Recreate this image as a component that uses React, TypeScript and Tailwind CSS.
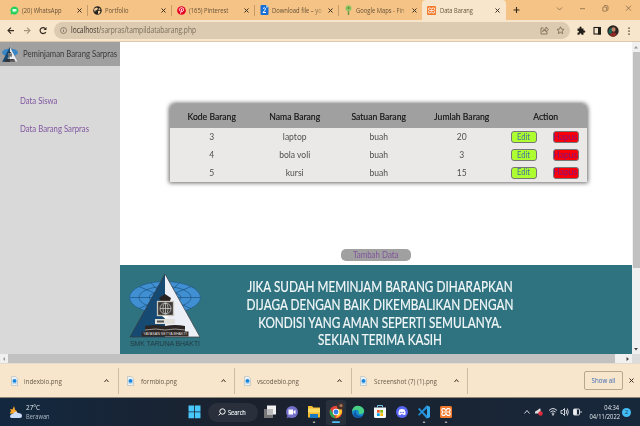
import React from 'react';

const tabs = [
  { title: '(20) WhatsApp', icon: 'wa' },
  { title: 'Portfolio', icon: 'globe' },
  { title: '(165) Pinterest', icon: 'pin' },
  { title: 'Download file – yo', icon: 'two' },
  { title: 'Google Maps - Fin', icon: 'map' },
];

const rows = [
  ['3', 'laptop', 'buah', '20'],
  ['4', 'bola voli', 'buah', '3'],
  ['5', 'kursi', 'buah', '15'],
];

const downloads = ['indexbio.png', 'formbio.png', 'vscodebio.png', 'Screenshot (7) (1).png'];

function Xampp({ className }: { className: string }) {
  return (
    <svg className={className} viewBox="0 0 16 16">
      <rect width="16" height="16" rx="2" fill="#f27a2c" />
      <path d="M4 3.500h2.200L8 6l1.800-2.500H12q1.500 0 1.500 1.500v1.300L12 8l1.500 1.700V11q0 1.500-1.500 1.500H9.800L8 10l-1.800 2.500H4Q2.500 12.500 2.500 11V9.700L4 8 2.500 6.300V5Q2.500 3.500 4 3.500Z" fill="none" stroke="#fff" strokeWidth="1.500" />
      <path d="M5 8h6" stroke="#fff" strokeWidth="1.500" />
    </svg>
  );
}

function TabIcon({ name }: { name: string }) {
  const cls = 'h-[9px] w-[9px] shrink-0';
  if (name === 'wa')
    return (
      <svg className={cls} viewBox="0 0 18 18">
        <path d="M9 1a8 8 0 1 1-4 15l-4 1 1-4A8 8 0 0 1 9 1Z" fill="#27cf5b" />
        <path d="M5 6h8v5H9l-2 2v-2H5Z" fill="#d9ffe4" />
      </svg>
    );
  if (name === 'globe')
    return (
      <svg className={cls} viewBox="0 0 18 18">
        <circle cx="9" cy="9" r="8.500" fill="#272522" />
        <path d="m3 5 4-2 3 2-2 3-3 1-1 3-2-4Zm7 5 3-1 2 2-2 4-3 1Zm2-6 3 2-1 2-3-1Z" fill="#f3ca97" />
      </svg>
    );
  if (name === 'pin')
    return (
      <svg className={cls} viewBox="0 0 18 18">
        <circle cx="9" cy="9" r="8.700" fill="#e60023" />
        <path d="m7 15 2.500-9M6 10C3 6 6 3.500 9.300 3.500c4 0 4.700 3.500 3.300 6-1 2-3.400 2-4 .5" fill="none" stroke="#fff" strokeWidth="1.900" />
      </svg>
    );
  if (name === 'two')
    return (
      <svg className="h-[10px] w-[9px] shrink-0" viewBox="0 0 18 20">
        <path d="M3 0h9l5 5v13q0 2-2 2H3q-2 0-2-2V2q0-2 2-2Z" fill="#176fd6" />
        <path d="m12 0 5 5h-5Z" fill="#8fd1ff" />
        <path d="M6 7q3-3 5 0 0 3-5 8h6" fill="none" stroke="#fff" strokeWidth="2" />
      </svg>
    );
  return (
    <svg className="h-[10px] w-[9px] shrink-0" viewBox="0 0 18 20">
      <path d="M9 9v11" stroke="#729345" strokeWidth="3" />
      <circle cx="9" cy="6.500" r="6" fill="#91c465" />
      <circle cx="9" cy="6" r="2" fill="#57843c" />
    </svg>
  );
}

function Close({ className = 'h-[5px] w-[5px]' }: { className?: string }) {
  return (
    <svg className={`${className} shrink-0`} viewBox="0 0 10 10">
      <path d="m1 1 8 8m0-8-8 8" stroke="#3b3024" strokeWidth="2" />
    </svg>
  );
}

function TabStrip() {
  return (
    <div className="flex h-5 bg-[#f4c385] text-[7.300px] text-[#67523a]">
      <div className="flex w-[422px] items-center pl-[5px]">
        {tabs.map((t, i) => (
          <div
            key={t.title}
            className={`flex h-[11px] w-[83.400px] items-center pl-[5px] pr-[5px] ${i < 4 ? 'border-r border-[#c49c69]' : ''}`}
          >
            <TabIcon name={t.icon} />
            <div className={`ml-[3px] w-[54px] whitespace-nowrap leading-[11px] ${i > 2 ? '[mask-image:linear-gradient(to_right,black_78%,transparent)]' : ''}`}>
              <span className="inline-block origin-left scale-x-[0.8]">{t.title}</span>
            </div>
            <div className="grow" />
            <Close />
          </div>
        ))}
      </div>
      <div className="flex w-[84px] items-center rounded-t-[4px] bg-[#f8e6cc] pl-[5px] pr-[6px]">
        <Xampp className="h-[9px] w-[9px] shrink-0" />
        <span className="ml-[4px] w-[54px] origin-left scale-x-[0.78] whitespace-nowrap">Data Barang</span>
        <div className="grow" />
        <Close />
      </div>
      <svg className="h-5 w-[134px]" viewBox="506 0 134 20" fill="none" stroke="#85694a" strokeWidth="0.8">
        <path d="M513.500 10h6m-3-3v6" stroke="#382819" strokeWidth="1.100" />
        <path d="m557 7.500 2.500 2.500 2.500-2.500M580 8.700h5M626 5.700l5 5m0-5-5 5" />
        <rect x="602.800" y="7" width="3.800" height="4.200" rx="0.800" />
        <path d="M604 6q0-.5 1-.5h1.500q1.500 0 1.500 1.500v2.500q0 1-1 1" />
      </svg>
    </div>
  );
}

function Toolbar() {
  return (
    <div className="flex h-[22px] items-center border-b border-[#dcc9ad] bg-[#f8e6cc]">
      <svg className="h-[21px] w-[54px]" viewBox="0 20 54 21" fill="none" strokeWidth="1.100">
        <path d="M14 30.600H8m3-3-3 3 3 3" stroke="#332a20" />
        <path d="M24 30.600h6m-3-3 3 3-3 3" stroke="#a6957d" />
        <path d="M45.500 28.700a3 3 0 1 0 .3 3.200" stroke="#332a20" strokeWidth="1.200" />
        <path d="M46.500 27v3h-3Z" fill="#332a20" />
      </svg>
      <div className="flex h-[17px] w-[96px] grow items-center rounded-full bg-[#dccbb1] pl-[6px] pr-[5px]">
        <svg className="h-[7px] w-[7px] shrink-0" viewBox="0 0 14 14" fill="none" stroke="#6b6255" strokeWidth="1.400">
          <circle cx="7" cy="7" r="6" />
          <path d="M7 6v4M7 3.500v1.500" />
        </svg>
        <span className="ml-[4px] origin-left scale-x-[0.8] whitespace-nowrap text-[8.300px] leading-none text-[#776b5b]">
          <span className="text-[#3b342b]">localhost</span>/sarpras/tampildatabarang.php
        </span>
        <div className="grow" />
        <svg className="h-[9px] w-[25px]" viewBox="0 0 25 9" fill="none" stroke="#756650" strokeWidth="0.800">
          <path d="M3.500 2H1v6h6V6M2.500 5.500q.5-2.500 3.500-2.500V1l2.500 2.800L6 6V4.300Q4 4.200 2.500 5.500Z" />
          <path d="m20.500.8 1 2.300 2.500.3-1.900 1.700.5 2.500-2.100-1.300-2.200 1.300.6-2.500L17 3.400l2.500-.3Z" />
        </svg>
      </div>
      <svg className="h-[21px] w-[70px]" viewBox="570 20 70 21">
        <path d="M577.500 28.500h2q-.5-2 1-2t1 2h2v2q1.800-.5 1.800 1t-1.800 1v2.200h-2q0-1.500-1.100-1.500t-1 1.500h-1.900v-2q1.500 0 1.500-1t-1.500-1Z" fill="#211d19" />
        <rect x="594" y="27.500" width="6.200" height="6.500" fill="none" stroke="#211d19" strokeWidth="1.100" />
        <path d="M598 27h3v7.500h-3Z" fill="#211d19" />
        <circle cx="613" cy="31" r="5.700" fill="#2b2420" />
        <path d="M608.500 33q0-6 4-5l-1 7Z" fill="#1d6259" />
        <ellipse cx="613.600" cy="29.500" rx="2" ry="2.200" fill="#c18267" />
        <path d="M609.500 35q3.500-5 7.500-1l-2.500 2.500h-3Z" fill="#8e2a23" />
        <path d="M628.300 27.400h1.400v1.400h-1.400Zm0 3h1.400v1.400h-1.400Zm0 3h1.400v1.400h-1.400Z" fill="#3a3024" />
      </svg>
    </div>
  );
}

function SchoolMark({ className }: { className: string }) {
  return (
    <svg className={`${className} shrink-0`} viewBox="0 0 72 64" preserveAspectRatio="none">
      <ellipse cx="36" cy="23.500" rx="35.500" ry="16" fill="#3f8fd2" stroke="#225c8a" strokeWidth="0.700" />
      <g fill="none" stroke="#1d5380" strokeWidth="0.700">
        <ellipse cx="36" cy="23.500" rx="26" ry="11" />
        <ellipse cx="36" cy="23.500" rx="16" ry="6" />
        <path d="M1 23.500h70M10 12.500l52 22M62 12.500l-52 22M22 9l28 29M50 9 22 38" />
      </g>
      <path d="M36 0 1 63h35Z" fill="#174a73" />
      <path d="m36 0 35 63H36Z" fill="#eceff5" />
      <path d="M36 0 1 63h70Z" fill="none" stroke="#333b40" strokeWidth="0.700" />
      <path d="m30 24 6-4 6 4-1 3h-9Z" fill="#282221" />
      <rect x="28.500" y="27.500" width="16" height="14" fill="#3b3837" stroke="#c9c6be" strokeWidth="1.300" />
      <g fill="none" stroke="#d8d8d3" strokeWidth="0.700">
        <circle cx="36.500" cy="34.500" r="5.500" />
        <ellipse cx="36.500" cy="34.500" rx="2.500" ry="5.500" />
        <path d="M31 34.500h11M36.500 29v11" />
      </g>
      <path d="m33 42 3.500 3 3.500-3Z" fill="#fff" />
      <path d="M26 45h20v5H26Z" fill="#e2e0db" />
      <path d="M28 46.500h7v2h-7Z" fill="#50504f" />
      <path d="M16 52q11-2 20 0 10-2 20 0v6H16Z" fill="#2b2525" />
      <path d="M16 56q11-2 20 0 10-2 20 0" fill="none" stroke="#cfc9bd" strokeWidth="0.700" />
      <path d="M12.500 57.500h47v5h-47Z" fill="#332b2a" />
    </svg>
  );
}

const actionCls =
  'flex h-[12px] w-[26px] items-center justify-center rounded-[3px] border border-[#767676] text-[8.800px] leading-none';

function Page() {
  return (
    <div className="flex h-[312px] font-[Lato,sans-serif]">
      <aside className="w-[120px] bg-[#d9d9d9]">
        <div className="flex h-6 items-center bg-[#a0a0a0] pl-[2px]">
          <SchoolMark className="h-[15px] w-4" />
          <span className="ml-[4.500px] origin-left scale-x-[0.88] whitespace-nowrap text-[8.800px] text-[#3a3a3a]">Peminjaman Barang Sarpras</span>
        </div>
        <nav className="flex flex-col gap-4 pl-5 pt-[29px] text-[8.800px] leading-[12px] text-[#8157a0]">
          <span className="origin-left scale-x-[0.88]">Data Siswa</span>
          <span className="origin-left scale-x-[0.88]">Data Barang Sarpras</span>
        </nav>
      </aside>
      <main className="flex w-[512px] flex-col bg-white">
        <div className="ml-[50px] mt-[62px] h-[78px] w-[417px] rounded-t-[5px] bg-[#ebe9e8] shadow-[0_0_4px_1px_#666666]">
          <div className="grid h-6 grid-cols-5 items-center rounded-t-[5px] bg-[#a0a0a0] pt-[2px] text-center text-[9.200px] text-[#111] [-webkit-text-stroke:0.150px_#111]">
            {['Kode Barang', 'Nama Barang', 'Satuan Barang', 'Jumlah Barang', 'Action'].map((h) => (
              <span key={h} className="scale-x-[0.94]">{h}</span>
            ))}
          </div>
          {rows.map((r) => (
            <div key={r[0]} className="grid h-[17.700px] grid-cols-5 items-center pt-[1px] text-center text-[9.200px] leading-[12px] text-[#505050]">
              {r.map((c, i) => (
                <span key={i} className="scale-x-[0.93]">{c}</span>
              ))}
              <div className="flex gap-[16px] pl-[7px]">
                <span className={`${actionCls} bg-[#adff2f] text-[#44719a]`}><span className="scale-x-[0.87]">Edit</span></span>
                <span className={`${actionCls} bg-[#fb0008] text-[#8a1078]`}><span className="scale-x-[0.98]">Hapus</span></span>
              </div>
            </div>
          ))}
        </div>
        <div className="ml-[221px] mt-[67px] flex h-[12px] w-[70px] items-center justify-center rounded-[5px] bg-[#a0a0a0] pt-[1px] text-[8.600px] text-[#80539c]">
          <span className="scale-x-[0.92] whitespace-nowrap">Tambah Data</span>
        </div>
        <footer className="mt-[4px] flex h-[89px] bg-[#307380]">
          <div className="flex w-[90px] flex-col items-center pt-[9px]">
            <div className="relative">
              <SchoolMark className="h-[64px] w-[72px]" />
              <span className="absolute bottom-[1px] left-0 w-full whitespace-nowrap text-center font-['Liberation_Sans',sans-serif] text-[3.700px] leading-[5px] text-[#ddd]">
                YAYASAN SETYA BHAKTI
              </span>
            </div>
            <span className="mt-[1px] whitespace-nowrap font-['Liberation_Sans',sans-serif] text-[6.900px] leading-[9px] tracking-[-0.01em] text-[#203b45]">
              SMK TARUNA BHAKTI
            </span>
          </div>
          <p className="ml-0 w-[340px] origin-center scale-x-[0.794] whitespace-nowrap pt-[13px] text-center text-[14.800px] leading-[17.800px] text-[#f2f7f8] [-webkit-text-stroke:0.200px_#f2f7f8]">
            <span className="block">JIKA SUDAH MEMINJAM BARANG DIHARAPKAN</span>
            <span className="block">DIJAGA DENGAN BAIK DIKEMBALIKAN DENGAN</span>
            <span className="block">KONDISI YANG AMAN SEPERTI SEMULANYA.</span>
            <span className="block">SEKIAN TERIMA KASIH</span>
          </p>
        </footer>
      </main>
      <div className="flex w-2 flex-col items-center bg-[#f0f0f0]">
        <svg className="h-[10px] w-2" viewBox="0 0 8 10"><path d="m2 6.500 2-2.500 2 2.500Z" fill="#999" /></svg>
        <div className="h-[216px] w-[7px] bg-[#c1c1c1]" />
        <div className="grow" />
        <svg className="h-[10px] w-2" viewBox="0 0 8 10"><path d="m2 4 2 2.500L6 4Z" fill="#444" /></svg>
      </div>
    </div>
  );
}

function HorizontalScroll() {
  return (
    <div className="flex h-[10px] items-center border-b border-[#e5dacb] bg-[#f0f0f0]">
      <svg className="h-2 w-2" viewBox="0 0 8 8"><path d="M5 2v4L3 4Z" fill="#999" /></svg>
      <div className="h-[9px] w-[607px] bg-[#c1c1c1]" />
      <svg className="h-2 w-[17px]" viewBox="0 0 17 8"><path d="M11.500 2v4L14 4Z" fill="#444" /></svg>
      <div className="h-full w-2 bg-[#dcdcdc]" />
    </div>
  );
}

function Downloads() {
  return (
    <div className="flex h-[34px] items-center border-b border-[#8f8678] bg-[#f8e6cc] pl-[2px] text-[8px] text-[#665a4a]">
      {downloads.map((d) => (
        <div key={d} className="flex h-[26px] w-[116.500px] shrink-0 items-center border-r border-[#cdbca2] pl-[8.500px]">
          <svg className="h-[10px] w-[7px] shrink-0" viewBox="0 0 14 20">
            <path d="M1 1h8l4 4v14H1Z" fill="#e9f1f5" stroke="#a4acae" />
            <circle cx="7" cy="10" r="4" fill="#1685dd" />
            <path d="M3 14h8" stroke="#8bbfe4" strokeWidth="2" />
          </svg>
          <span className="ml-[6.500px] w-[80px] shrink-0 origin-left scale-x-[0.78] whitespace-nowrap">{d}</span>
          <svg className="h-[5px] w-[5px] shrink-0" viewBox="0 0 10 8"><path d="m1 7 4-5 4 5" fill="none" stroke="#40362a" strokeWidth="2" /></svg>
        </div>
      ))}
      <div className="grow" />
      <div className="mr-[6px] flex h-[19px] w-[39px] items-center justify-center rounded-[2px] border border-[#b6a78f] text-[7.500px] text-[#3969b4]">
        <span className="scale-x-[0.82] whitespace-nowrap">Show all</span>
      </div>
      <div className="mr-[6px]"><Close /></div>
    </div>
  );
}

function TaskIcons() {
  return (
    <svg className="h-7 w-[200px]" viewBox="259 398 200 28">
      <rect x="264" y="409" width="9" height="9" fill="#777" />
      <rect x="267" y="405.500" width="9" height="9" fill="#f1f1f1" />
      <rect x="267" y="409" width="6" height="5.500" fill="#bbb" />
      <circle cx="292" cy="412" r="6" fill="#7470ca" />
      <path d="m286.500 418 2-4 3 3Z" fill="#7470ca" />
      <path d="M288.500 409.500h4.500v5h-4.500Zm5 1.500 2-1v4l-2-1Z" fill="#fff" />
      <path d="M308 406h4l1.500 1.500h6.500v10h-12Z" fill="#f3bb32" />
      <path d="M308 408.500h12v4h-12Z" fill="#ffda63" />
      <path d="M310 414h8v4h-8Z" fill="#187ac0" />
      <rect x="312.800" y="421.600" width="2.500" height="1.300" rx=".6" fill="#aaa" />
      <rect x="326" y="400" width="20" height="25" rx="2.500" fill="#28303c" />
      <circle cx="336" cy="412" r="6.300" fill="#e74435" />
      <path d="m330.500 409 5 9.300A6.300 6.300 0 0 1 330.500 409Z" fill="#26a852" />
      <path d="M336 409h5.600q2 6-6 9.300l3-6.300Z" fill="#ffc928" />
      <circle cx="336" cy="412" r="3.200" fill="#fff" />
      <circle cx="336" cy="412" r="2.400" fill="#317ee8" />
      <circle cx="340.500" cy="406" r="3.600" fill="#47322a" />
      <circle cx="341" cy="405.500" r="1.500" fill="#a57662" />
      <rect x="332" y="421.300" width="8" height="1.700" rx=".8" fill="#4fc1f5" />
      <circle cx="358" cy="412" r="6" fill="#1688ce" />
      <path d="M352.200 410q2-5 7-4 5 1 5 5.500-.5 2.500-4 2.500-2 0-1.500-1 .5-4-4-3-2 0-2.500 2Z" fill="#49cf83" />
      <path d="M356 410q-2 6 6.500 6-2.500 3-7 1.500-4-3 .5-7.500Z" fill="#1158a5" />
      <path d="M374 407.500h12v9q0 1.500-1.500 1.500h-9q-1.500 0-1.500-1.500Z" fill="#f4f6f7" />
      <path d="M377.500 407.500v-2h5v2" fill="none" stroke="#79bde4" />
      <path d="M377 410h2.700v2.700H377Z" fill="#f25022" /><path d="M380.300 410h2.700v2.700h-2.700Z" fill="#7fba00" />
      <path d="M377 413.300h2.700v2.700H377Z" fill="#00a4ef" /><path d="M380.300 413.300h2.700v2.700h-2.700Z" fill="#ffb900" />
      <circle cx="402" cy="412" r="6" fill="#5865f2" />
      <path d="M399.500 409.500q2.500-1 5 0 1.500 2.500 1 5l-1.800.8-.7-1h-2l-.7 1-1.800-.8q-.5-2.500 1-5Z" fill="#fff" />
      <circle cx="400.900" cy="412.500" r=".8" fill="#5865f2" /><circle cx="403.200" cy="412.500" r=".8" fill="#5865f2" />
      <path d="m418 409 1.500-1 7.500 7.500v-7l-8 7.300-1-1 8.500-9.300 3.500 1.500v10l-3.500 1.500Z" fill="#238fd8" />
      <path d="M427 405.500 430 407v10l-3 1.500Z" fill="#36a9ed" />
      <rect x="422.800" y="421.600" width="2.500" height="1.300" rx=".6" fill="#aaa" />
      <rect x="444.800" y="421.600" width="2.500" height="1.300" rx=".6" fill="#aaa" />
      <svg x="440" y="405.500" width="12" height="13"><Xampp className="h-[13px] w-[12px]" /></svg>
    </svg>
  );
}

function Taskbar() {
  return (
    <div className="flex h-7 items-center bg-gradient-to-r from-[#12283f] via-[#1b212d] via-40% to-[#17283b] font-['Open_Sans',sans-serif] text-[6.500px] text-[#e3e7ed]">
      <svg className="ml-[9px] h-[14px] w-[13px]" viewBox="0 0 13 14">
        <path d="M5 1 6.200 5q3 1 1 4l-6.500-.5L2 6 1 4l2.500.5Z" fill="#f5a52e" />
        <path d="M3 13q-3-.5-1.500-3 1-1.500 2.500-1 2-4 5-1 4 0 4 3 0 2-2 2Z" fill="#c9dcfa" />
      </svg>
      <div className="ml-[3.500px] w-[162.500px] leading-[9.500px]">
        <div className="origin-left scale-x-[0.92] text-[7px]">27°C</div>
        <div className="origin-left scale-x-[0.82] text-[7px] text-[#b0bac7]">Berawan</div>
      </div>
      <svg className="h-[14px] w-[13px]" viewBox="0 0 13 14">
        <path d="M.5.500H6v6H.500ZM6.800.5h5.700v6H6.800ZM.5 7.300H6v6H.5ZM6.800 7.300h5.700v6H6.800Z" fill="#48c7fa" />
      </svg>
      <div className="ml-[7px] flex h-[19px] w-[50px] items-center rounded-full bg-[#29303c] pl-[10px] text-[7.200px]">
        <svg className="h-2 w-2 shrink-0" viewBox="0 0 8 8" fill="none" stroke="#fff"><circle cx="4.500" cy="3.500" r="2.700" /><path d="M2.500 5.500.700 7.300" /></svg>
        <span className="ml-[2px] origin-left scale-x-[0.78] [-webkit-text-stroke:0.150px_#fff]">Search</span>
      </div>
      <div className="ml-[1px]"><TaskIcons /></div>
      <div className="grow" />
      <svg className="h-5 w-[62px]" viewBox="522 402 62 20" fill="none" stroke="#e5e8ed" strokeWidth=".9">
        <path d="m525.500 413.500 2.500-3 2.500 3" />
        <path d="M536 413.500q-.5-2.500 2-3l3-2.200q1 1 .5 2.500v2.700Z" fill="#ddd" stroke="none" /><circle cx="541.500" cy="413.500" r="2.200" fill="#e12b3d" stroke="none" />
        <path d="M550 410.500q4-4 8 0M551.300 412q2.700-2.500 5.400 0M552.700 413.500q1.300-1.200 2.600 0" /><circle cx="554" cy="414.700" r=".6" />
        <path d="M562 410.500h1.500l2-2v7l-2-2H562ZM567 410q1.500 2 0 4M568.300 408.500q2 3.500 0 7" />
        <rect x="574.500" y="409" width="6" height="6" rx="1" /><path d="M575 409.500h2.500v5H575Z" fill="#eee" /><path d="M582 411v2" />
      </svg>
      <div className="w-[36px] origin-right scale-x-[0.82] whitespace-nowrap text-right text-[7px] leading-[9px]">
        <div>04:34</div>
        <div>04/11/2022</div>
      </div>
      <div className="ml-[3px] mr-[9px] flex h-[9px] w-[9px] shrink-0 items-center justify-center rounded-full bg-[#43bdf5] text-[6px] leading-none text-[#12354c]">2</div>
    </div>
  );
}

export default function App() {
  return (
    <div className="flex h-[426px] w-[640px] flex-col overflow-hidden bg-white font-['Open_Sans',sans-serif]">
      <TabStrip />
      <Toolbar />
      <Page />
      <HorizontalScroll />
      <Downloads />
      <Taskbar />
    </div>
  );
}
